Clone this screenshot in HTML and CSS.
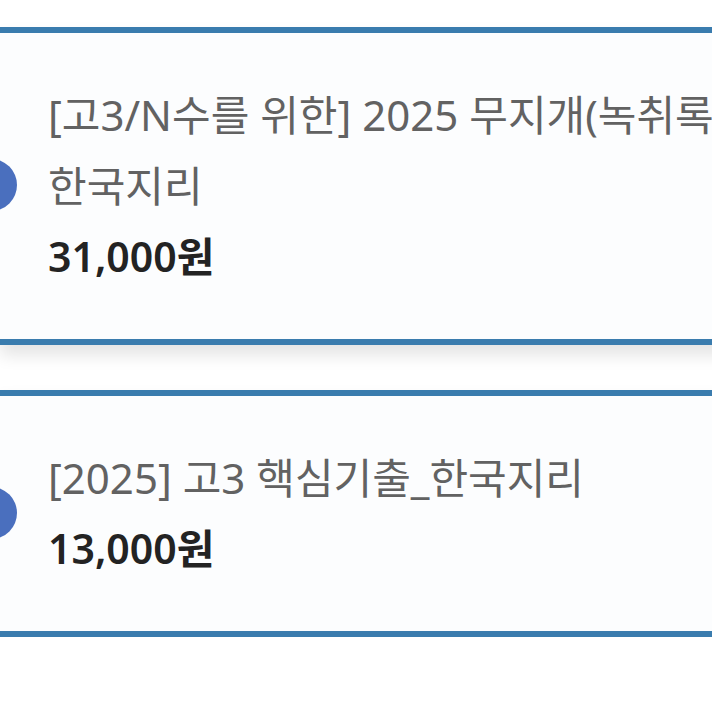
FILE: index.html
```html
<!DOCTYPE html>
<html lang="ko">
<head>
    <meta charset="UTF-8">
    <meta name="viewport" content="width=device-width, initial-scale=1.0">
    <title>교재 목록</title>
    <link rel="stylesheet" href="styles.css">
</head>
<body>

<div class="book-list">
    <div class="book-card">
        <span class="dot"></span>
        <div class="book-title">[고3/N수를 위한] 2025 무지개(녹취록) 한국지리</div>
        <div class="book-price">31,000원</div>
    </div>
    <div class="book-card">
        <span class="dot"></span>
        <div class="book-title">[2025] 고3 핵심기출_한국지리</div>
        <div class="book-price">13,000원</div>
    </div>
</div>

</body>
</html>
```

FILE: styles.css
```css
html, body {
    margin: 0;
    overflow: hidden;
}
body {
    font-family: "Noto Sans", "Noto Sans CJK KR", sans-serif;
    background-color: #fff;
    padding-top: 27px;
}
.book-list {
    display: flex;
    flex-direction: column;
    gap: 45px;
    width: 760px; /* la tarjeta sigue fuera de la pantalla */
}
.book-card {
    position: relative;
    background: #fcfdfe;
    border-top: 6px solid #3a7cae;
    border-bottom: 6px solid #3a7cae;
    padding: 46px 0 47px 48px;
    box-shadow: 0 10px 16px rgba(0, 0, 0, 0.11);
}
.dot {
    position: absolute;
    left: -35px;
    top: 50%;
    width: 52px;
    height: 52px;
    margin-top: -27px;
    border-radius: 50%;
    background: #4a6fbe;
}
.book-title {
    font-size: 42px;
    line-height: 71px;
    color: #626262;
    width: 690px;
    word-break: keep-all;
}
.book-price {
    font-size: 41px;
    line-height: 71px;
    font-weight: 600;
    color: #232323;
}
```
